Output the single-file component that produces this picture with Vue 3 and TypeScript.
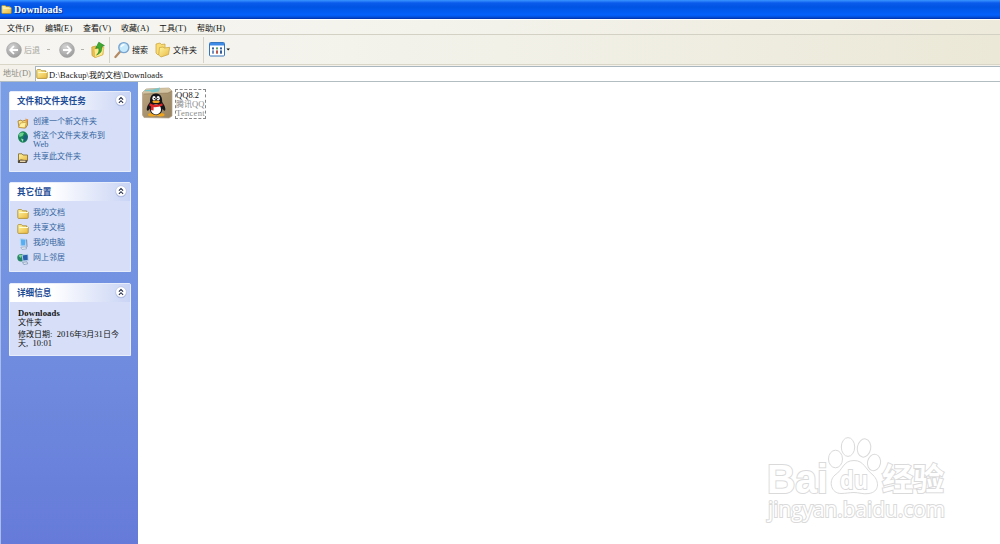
<script setup lang="ts">
import { h, type FunctionalComponent } from 'vue'

// Sets the Latin runs of mixed text in a serif face about half a CJK cell per character.
const Mixed: FunctionalComponent<{ t: string }> = (props) =>
  h('span', { class: 'mixed' },
    (props.t.match(/[\x20-\x7e]+|[^\x20-\x7e]+/g) ?? []).map((s) =>
      h('span', { class: s.charCodeAt(0) < 127 ? 'latin' : 'han' }, s)))
Mixed.props = ['t']

const menus = ['文件(F)', '编辑(E)', '查看(V)', '收藏(A)', '工具(T)', '帮助(H)']

interface Task { icon: string; lines: string[] }
interface Panel { title: string; cls: string; items: Task[] }
const panels: Panel[] = [
  {
    title: '文件和文件夹任务', cls: 'tasks', items: [
      { icon: 'new', lines: ['创建一个新文件夹'] },
      { icon: 'globe', lines: ['将这个文件夹发布到', 'Web'] },
      { icon: 'share', lines: ['共享此文件夹'] },
    ],
  },
  {
    title: '其它位置', cls: 'places', items: [
      { icon: 'folder', lines: ['我的文档'] },
      { icon: 'folder', lines: ['共享文档'] },
      { icon: 'pc', lines: ['我的电脑'] },
      { icon: 'net', lines: ['网上邻居'] },
    ],
  },
  { title: '详细信息', cls: 'details', items: [] },
]
</script>

<template>
  <div class="window">
    <svg class="defs" width="0" height="0">
      <defs>
        <linearGradient id="fold" x1="0" y1="0" x2="1" y2="1">
          <stop offset="0" stop-color="#fff6a4" /><stop offset="1" stop-color="#e9b83f" />
        </linearGradient>
        <radialGradient id="ball" cx=".4" cy=".3" r=".7">
          <stop offset="0" stop-color="#d4d4d4" /><stop offset="1" stop-color="#9c9c9c" />
        </radialGradient>
        <linearGradient id="box" x1="0" y1="0" x2="1" y2="1">
          <stop offset="0" stop-color="#bba57f" /><stop offset="1" stop-color="#96815f" />
        </linearGradient>
        <symbol id="folder" viewBox="0 0 12 12">
          <path d="M.8 2.4Q.8 1.6 1.6 1.6H4.5L5.6 2.8H9.6V4.2H11.2V9.6Q11.2 10.4 10.4 10.4H1.6Q.8 10.4.8 9.6Z" fill="url(#fold)" stroke="#a9892c" stroke-width=".8" />
          <path d="M2.4 4.5H11" stroke="#fffbd2" stroke-width="1" />
        </symbol>
      </defs>
    </svg>

    <header class="title">
      <svg width="11" height="11"><use href="#folder" /></svg>
      <span>Downloads</span>
    </header>

    <nav class="menu"><Mixed v-for="m in menus" :key="m" :t="m" /></nav>

    <div class="toolbar">
      <svg class="ball" width="16" height="16" viewBox="0 0 16 16">
        <circle cx="8" cy="8" r="7.4" fill="url(#ball)" stroke="#a5a5a5" stroke-width=".7" />
        <path d="M8 4L4.2 8L8 12M4.5 8H12" fill="none" stroke="#fff" stroke-width="1.8" />
      </svg>
      <span class="back"><Mixed t="后退" /></span>
      <i class="dot"></i>
      <svg class="fwd" width="16" height="16" viewBox="0 0 16 16">
        <circle cx="8" cy="8" r="7.4" fill="url(#ball)" stroke="#a5a5a5" stroke-width=".7" />
        <path d="M8 4L11.8 8L8 12M11.5 8H4" fill="none" stroke="#fff" stroke-width="1.8" />
      </svg>
      <i class="dot second"></i>
      <svg class="up" width="15" height="18" viewBox="0 0 15 18">
        <path d="M.8 6L5 5L6.5 6.5L12 5.5V13.5L4 16.5L1 14.5Z" fill="#eac154" stroke="#c29b36" stroke-width=".7" />
        <path d="M3 8L13 6.5L11.5 14L4 16.5Z" fill="#ffe98a" stroke="#d0a83a" stroke-width=".5" />
        <path d="M5.5 14Q9 11.5 7.6 6.8L4.6 7.4L7.8 1.2L13.4 4.6L10.6 5.6Q11.8 11.8 5.5 14Z" fill="#3fab31" stroke="#207c1c" stroke-width=".6" />
      </svg>
      <i class="sep"></i>
      <svg class="search" width="17" height="18" viewBox="0 0 17 18">
        <path d="M6.2 10.6L1.4 16" stroke="#b48a63" stroke-width="2.2" stroke-linecap="round" />
        <circle cx="9.8" cy="6.6" r="5" fill="#c6e9fc" stroke="#7aa5cf" stroke-width="1.4" />
        <path d="M7 6Q8 3.6 10.4 3.4" fill="none" stroke="#fff" stroke-width="1.5" />
      </svg>
      <span class="lbl"><Mixed t="搜索" /></span>
      <svg class="folders" width="16" height="16" viewBox="0 0 16 16">
        <path d="M1 2L5 1L6.5 2.5L10 2V10L3 13L1 11Z" fill="#f9dc73" stroke="#c69d37" stroke-width=".7" />
        <path d="M4.5 5.5L8 5L9.5 6L14.7 5.3L13.5 12.5L6 15L3.7 13Z" fill="url(#fold)" stroke="#c69d37" stroke-width=".7" />
      </svg>
      <span class="lbl"><Mixed t="文件夹" /></span>
      <i class="sep two"></i>
      <svg class="views" width="22" height="15" viewBox="0 0 22 15">
        <rect x=".5" y=".5" width="15" height="13.5" rx="1" fill="#fff" stroke="#3675ba" />
        <path d="M1 2.2H15" stroke="#3d8be6" stroke-width="2.6" />
        <g fill="#365f9c"><rect x="3" y="5.4" width="2" height="2" /><rect x="7" y="5.4" width="2" height="2" fill="#5a9e62" /><rect x="11" y="5.4" width="2" height="2" /><rect x="3" y="8.4" width="2" height="3.3" fill="#6f8ebf" /><rect x="7" y="8.4" width="2" height="3.3" fill="#b8564c" /><rect x="11" y="8.4" width="2" height="3.3" /></g>
        <path d="M17.4 6.6H21L19.2 8.6Z" fill="#111" />
      </svg>
    </div>

    <div class="address">
      <span class="alabel"><Mixed t="地址(D)" /></span>
      <div class="field">
        <svg width="12" height="12"><use href="#folder" /></svg>
        <Mixed t="D:\Backup\我的文档\Downloads" />
      </div>
    </div>

    <main>
      <aside>
        <section v-for="p in panels" :key="p.title" :class="p.cls">
          <h2>
            <Mixed :t="p.title" />
            <svg width="12" height="13" viewBox="0 0 12 13">
              <circle cx="6" cy="6.8" r="5.5" fill="#8e9bd0" opacity=".55" />
              <circle cx="6" cy="6" r="5.3" fill="#fff" stroke="#b6bfdf" stroke-width=".6" />
              <path d="M3.9 5.6L6 3.5L8.1 5.6M3.9 8.8L6 6.7L8.1 8.8" fill="none" stroke="#222b49" stroke-width="1.1" />
            </svg>
          </h2>
          <ul v-if="p.items.length">
            <li v-for="t in p.items" :key="t.lines[0]">
              <svg width="12" height="12" viewBox="0 0 12 12">
                <use v-if="t.icon === 'folder'" href="#folder" width="12" height="12" />
                <g v-else-if="t.icon === 'new'">
                  <path d="M1 4L4 3L5 4.2L10.5 2.6V8L8.5 11L2 10.5Z" fill="url(#fold)" stroke="#a4762a" stroke-width=".8" />
                  <path d="M8.8 .6L9.5 2.2L11.5 2.5L10 3.8L10.2 5.5L8.6 4.4Z" fill="#ef9a49" />
                  <path d="M1.6 10.3L3.4 6L9.4 5.2L8 10.9Z" fill="#fff0a0" stroke="#b78732" stroke-width=".6" />
                </g>
                <g v-else-if="t.icon === 'globe'">
                  <ellipse cx="6" cy="6" rx="5" ry="5.8" fill="#178356" />
                  <path d="M2 3Q5 .8 7 2L5.5 5L2.5 6Z" fill="#6bd08d" />
                  <path d="M8 3.5L10.8 5L9.5 9L7 10.5L6 7Z" fill="#1d5f7c" />
                  <path d="M4 7.5L6.5 8.5L5.5 11" fill="#a6e5ba" />
                </g>
                <g v-else-if="t.icon === 'share'">
                  <path d="M1.5 1.8H5L6 3H10.5V8.4H1.5Z" fill="url(#fold)" stroke="#86703a" stroke-width=".9" />
                  <path d="M.8 8.4L4 7.6L10.8 8.6L9.5 11H1Z" fill="#554b3c" />
                  <path d="M3 9.3H8.5" stroke="#e9d5aa" stroke-width="1.5" />
                </g>
                <g v-else-if="t.icon === 'pc'">
                  <path d="M3.2 .8L9 1.2L8.6 7.8L3.9 8Z" fill="#57aef3" stroke="#b9d5ef" stroke-width="1" />
                  <path d="M9.6 1.5L10 8.5L8.5 10" stroke="#6880a5" stroke-width=".9" fill="none" />
                  <path d="M3.8 9.4L8.6 8.8L9.6 10.8L5 11.5Z" fill="#e3ecf4" stroke="#7889aa" stroke-width=".5" />
                </g>
                <g v-else>
                  <circle cx="4" cy="4.7" r="3.7" fill="#278568" />
                  <path d="M1.5 3Q3 1 5 2L4 5Z" fill="#82d59b" />
                  <path d="M5.2 2L11 1.2L11.2 7.4L6 8Z" fill="#285fae" stroke="#bed6ed" stroke-width=".9" />
                  <path d="M5.6 9.4L10 8.8L10.7 10.8L6.8 11.5Z" fill="#e6edf5" stroke="#677fa5" stroke-width=".6" />
                </g>
              </svg>
              <span class="link"><Mixed v-for="l in t.lines" :key="l" :t="l" /></span>
            </li>
          </ul>
          <div v-else class="info">
            <b>Downloads</b>
            <Mixed t="文件夹" />
            <Mixed class="gap" t="修改日期:  2016年3月31日今" />
            <Mixed class="last" t="天,  10:01" />
          </div>
        </section>
      </aside>

      <div class="content">
        <div class="file">
          <svg width="32" height="34" viewBox="0 0 32 34">
            <path d="M1.5 6.5L5 3L28 2L31 5V30L28 32L3 31.5L1.5 29Z" fill="url(#box)" stroke="#b1a188" stroke-width=".7" />
            <path d="M1.5 6.5L5 3L28 2L31 5L27 7L3 8Z" fill="#d3c3a2" />
            <path d="M3 8L27 7L31 5" fill="none" stroke="#8d7653" stroke-width=".6" />
            <path d="M4 4L12 3.4L19 1.6L18 5.4L10.5 6.6L9.6 5.2L4 5.2Z" fill="#79c6c9" />
            <ellipse cx="11" cy="28.8" rx="4" ry="1.7" fill="#f0a51e" /><ellipse cx="19.5" cy="28.8" rx="4" ry="1.7" fill="#f0a51e" />
            <path d="M15 7.6C10 7.6 8.8 12 9 16C6.5 19 5 23 6.2 24.6C7.5 25 8.2 23.4 8.7 22.8C9.3 27 11.5 29 15 29S21 27 21.5 22.8C22 23.4 22.8 25 24 24.6C25.2 23 23.4 19 21.2 16C21.4 12 20 7.6 15 7.6Z" fill="#15161c" />
            <ellipse cx="15" cy="23.4" rx="5" ry="5" fill="#fff" />
            <ellipse cx="13" cy="12.2" rx="1.6" ry="2.2" fill="#fff" /><ellipse cx="17.2" cy="12.2" rx="1.6" ry="2.2" fill="#fff" />
            <circle cx="13.4" cy="12.6" r=".7" /><circle cx="16.8" cy="12.6" r=".7" />
            <ellipse cx="15.1" cy="15.8" rx="3.7" ry="1.3" fill="#f5a51d" />
            <path d="M8.8 17.2Q15 20.4 21.2 17.2L21.8 19.4Q17 21.4 12.7 21.1L12.5 24.5L9.8 24L10 20.5L8.3 19.5Z" fill="#dc2828" />
          </svg>
          <div class="fname"><Mixed t="QQ8.2" /><Mixed class="dim" t="腾讯QQ" /><Mixed class="dim wide" t="Tencent" /></div>
        </div>

        <svg class="mark" width="200" height="100" viewBox="0 0 200 100">
          <g fill="#fff" stroke="#dadada" stroke-width="1">
            <text class="heavy" x="5" y="60" font-size="41" textLength="61" lengthAdjust="spacingAndGlyphs">Bai</text>
            <text class="cn" x="120" y="57" font-size="31" textLength="62" lengthAdjust="spacingAndGlyphs">经验</text>
            <path d="M92 27.5C81 27.5 81 37 73 42C66 48 69 60.5 79 60.5C84 60.5 87 59.5 92 59.5S101 61.5 107 60.5C117 59 118 49 111 42C103 36 102 27.5 92 27.5Z" />
            <ellipse cx="73.5" cy="26" rx="7" ry="8.8" /><ellipse cx="86" cy="14" rx="6.7" ry="9.4" />
            <ellipse cx="102" cy="15" rx="6.7" ry="9.2" transform="rotate(10 102 15)" /><ellipse cx="112" cy="29.5" rx="6.5" ry="8.3" transform="rotate(12 112 29.5)" />
            <text class="du" x="78" y="56" font-size="25" textLength="28" lengthAdjust="spacingAndGlyphs">du</text>
            <text class="url" x="6" y="83.5" font-size="21" textLength="177" lengthAdjust="spacingAndGlyphs">jingyan.baidu.com</text>
          </g>
        </svg>
      </div>
    </main>
  </div>
</template>

<style>
body { margin: 0; overflow: hidden; }
.mixed { white-space: nowrap; display: inline-block; height: 9px; }
.mixed .latin { font-family: "Liberation Serif", serif; font-size: 8.5px; letter-spacing: 0.05px; white-space: pre; }
</style>

<style scoped>
.window { width: 1000px; height: 544px; display: flex; flex-direction: column; background: #fff; font: 8px/9px "Noto Sans CJK SC", sans-serif; color: #111; overflow: hidden; }
.defs { position: absolute; }
svg { flex: none; display: block; }
.title { height: 19px; box-sizing: border-box; flex: none; display: flex; align-items: center; gap: 2px; padding-left: 1px; padding-bottom: 1px; background: linear-gradient(#3a95ff 0, #0a5bec 3px, #0054e3 7px, #0360fb 15px, #0350dd 17px, #0031a8 19px); color: #fff; font: bold 10px/16px "Liberation Serif", serif; letter-spacing: 0.12px; }
.title span { text-shadow: 1px 1px #0a2f8d; padding-top: 1px; }
.menu { height: 16px; box-sizing: border-box; flex: none; border-top: 1px solid #fff; border-bottom: 1px solid #d3d1c4; display: flex; align-items: center; padding: 0 0 0 7px; background: linear-gradient(90deg, #f6f5f1, #f3f2ea 50%, #edeadb); }
.menu > span { width: 38px; }
.menu :deep(.latin) { letter-spacing: 0.2px; }
.toolbar { height: 30px; box-sizing: border-box; flex: none; display: flex; align-items: center; padding-left: 6px; background: linear-gradient(90deg, #f6f5f2, #f2f1e8 50%, #ebe8d7); border-bottom: 1px solid #d9d6c8; }
.back { color: #a5a49b; margin-left: 2px; }
.dot { width: 3px; height: 1px; margin-left: 7px; background: #b3b2ab; }
.dot.second { margin-left: 6px; }
.fwd { margin-left: 9px; }
.up { margin-left: 7px; }
.sep { width: 1px; height: 26px; margin-left: 3px; background: #d5d3c8; }
.search { margin-left: 4px; }
.lbl { margin-left: 1px; }
.folders { margin-left: 7px; }
.folders + .lbl { margin-left: 2px; }
.sep.two { margin-left: 6px; }
.views { margin-left: 5px; }
.address { height: 17px; box-sizing: border-box; flex: none; display: flex; padding-top: 1px; background: #f3f1e9; border-bottom: 1px solid #b2bdc2; }
.alabel { width: 35px; box-sizing: border-box; padding: 2px 0 0 3px; color: #8b8b85; }
.field { flex: 1; display: flex; align-items: center; gap: 1px; background: #fff; border: 1px solid #aab6bd; border-right: 0; border-bottom: 0; }
.field :deep(.latin) { letter-spacing: 0.08px; }
main { flex: 1; display: flex; min-height: 0; }
aside { flex: none; width: 138px; box-sizing: border-box; border-left: 1px solid #a9bdec; padding: 9px 7px 0 8px; background: linear-gradient(#7a9ee6, #7290e0 50%, #667bd9); display: flex; flex-direction: column; }
section { box-sizing: border-box; width: 122px; background: #d6dff7; border: 1px solid #e8edfb; border-radius: 2px 2px 0 0; }
.tasks { height: 81px; margin-bottom: 10px; } .places { height: 90px; margin-bottom: 11px; } .details { height: 73px; }
h2 { margin: 0; height: 18px; box-sizing: border-box; padding: 0 3px 2px 7px; display: flex; align-items: center; justify-content: space-between; background: linear-gradient(90deg, #fff 35%, #c9d4f5); font: bold 8.6px/9px "Noto Sans CJK SC", sans-serif; color: #1d4c96; }
ul { list-style: none; margin: 0; padding: 6px 0 0 7px; }
li { display: flex; gap: 4px; height: 15px; color: #35659f; }
li svg { margin-top: 1px; }
.link { display: flex; flex-direction: column; }
.tasks li:nth-child(1) { height: 14px; }
.tasks li:nth-child(2) { height: 21px; }
.info { display: flex; flex-direction: column; align-items: flex-start; padding: 7px 0 0 8px; line-height: 9px; }
.info b { font: bold 8.6px/9px "Liberation Serif", serif; letter-spacing: 0.15px; height: 8px; }
.gap { margin-top: 3px; }
.content { flex: 1; position: relative; padding: 5px 0 0 3px; }
.file { display: flex; gap: 2px; }
.file > svg { margin-top: -1px; }
.fname { width: 31px; height: 30px; box-sizing: border-box; margin-top: 2px; border: 1px dashed #888; display: flex; flex-direction: column; }
.dim { color: #8c8c8c; }
.wide :deep(.latin), .fname .wide { letter-spacing: 0.3px; }
.mark { position: absolute; left: 624px; top: 351px; }
.mark text { paint-order: stroke; stroke-width: 2px; }
.heavy { font-family: "Liberation Sans", Arial, sans-serif; font-weight: bold; }
.cn { font-family: "Noto Sans CJK SC", sans-serif; font-weight: bold; }
.du { font-family: "Open Sans", sans-serif; font-weight: bold; }
.url { font-family: "Open Sans", sans-serif; }
</style>
